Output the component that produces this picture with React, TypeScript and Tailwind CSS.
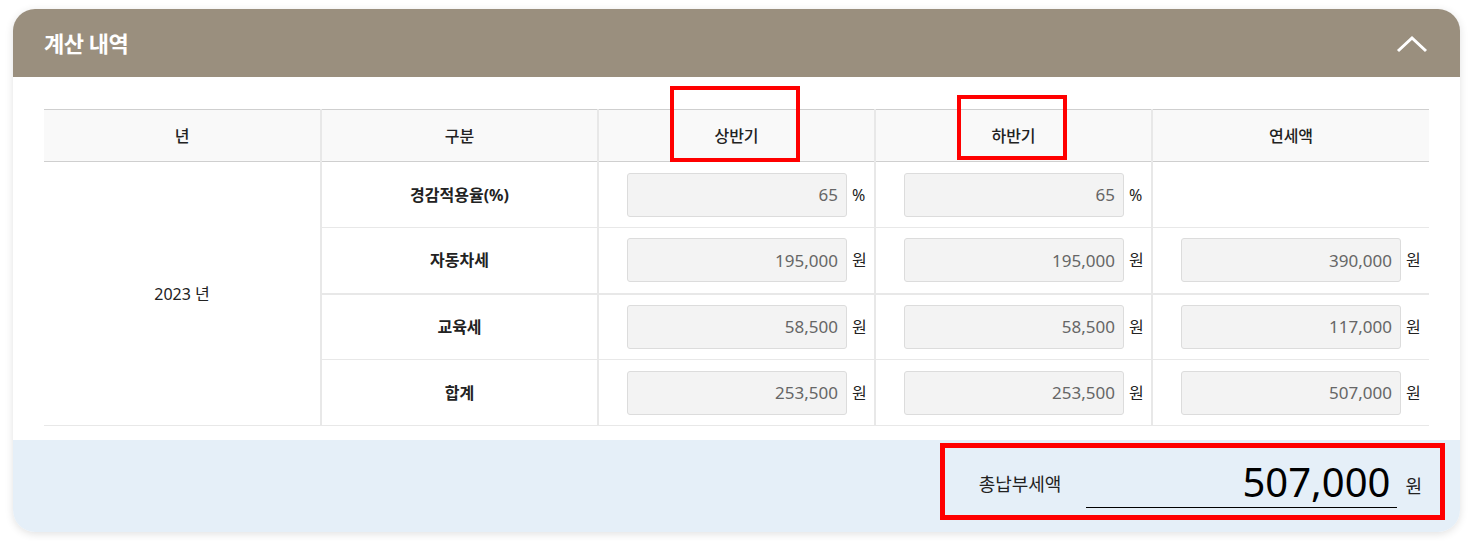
import React from 'react';

const font = { fontFamily: '"Noto Sans", "Noto Sans CJK KR", sans-serif' };

// rows of the calculation table
const rows = [
  { label: '경감적용율(%)', first: '65', second: '65', total: null as string | null, unit: '%' },
  { label: '자동차세', first: '195,000', second: '195,000', total: '390,000', unit: '원' },
  { label: '교육세', first: '58,500', second: '58,500', total: '117,000', unit: '원' },
  { label: '합계', first: '253,500', second: '253,500', total: '507,000', unit: '원' },
];

function ValueBox({ value, unit }: { value: string; unit: string }) {
  return (
    <div className="flex items-center pl-[28px]">
      <div className="w-[220px] h-[44px] flex items-center justify-end pr-[8px] bg-[#f3f3f3] border border-[#dcdcdc] rounded-[3px] text-[17px] text-[#666]">
        {value}
      </div>
      <span className="ml-[5px] text-[16px] text-[#222]">{unit}</span>
    </div>
  );
}

export default function App() {
  return (
    <div className="min-h-screen bg-white pt-[9px] pl-[13px]" style={font}>
      <div className="relative w-[1447px] rounded-[22px] bg-white shadow-[0_2px_8px_rgba(0,0,0,0.12)] overflow-hidden">
        {/* Header */}
        <div className="h-[68px] bg-[#9a8f7e] flex items-center justify-between pl-[31px] pr-[32px]">
          <h2 className="text-[22px] font-bold text-white tracking-[-0.5px]">계산 내역</h2>
          <svg width="32" height="18" viewBox="0 0 32 18" fill="none" className="mt-[2px]">
            <path d="M2 16L16 3L30 16" stroke="white" strokeWidth="3" />
          </svg>
        </div>

        {/* Table */}
        <div className="px-[31px] pt-[32px] pb-[14px]">
          <table className="w-[1385px] table-fixed border-collapse text-[16px] text-[#222]">
            <thead>
              <tr className="h-[52px] bg-[#f9f9f9] border-t border-b border-[#cfcfcf]">
                {['년', '구분', '상반기', '하반기', '연세액'].map((h, i) => (
                  <th
                    key={h}
                    className={`font-medium ${i > 0 ? 'border-l-2 border-[#e8e8e8]' : ''}`}
                  >
                    {h}
                  </th>
                ))}
              </tr>
            </thead>
            <tbody>
              {rows.map((r, i) => (
                <tr
                  key={r.label}
                  className={`h-[66px] ${i === 1 ? 'border-b-2' : 'border-b'} border-[#e8e8e8]`}
                >
                  {i === 0 && (
                    <td rowSpan={4} className="text-center align-middle">
                      2023 년
                    </td>
                  )}
                  <td className="text-center font-bold border-l-2 border-[#e8e8e8]">{r.label}</td>
                  <td className="border-l-2 border-[#e8e8e8]">
                    <ValueBox value={r.first} unit={r.unit} />
                  </td>
                  <td className="border-l-2 border-[#e8e8e8]">
                    <ValueBox value={r.second} unit={r.unit} />
                  </td>
                  <td className="border-l-2 border-[#e8e8e8]">
                    {r.total && <ValueBox value={r.total} unit={r.unit} />}
                  </td>
                </tr>
              ))}
            </tbody>
          </table>
        </div>

        {/* Total */}
        <div className="h-[92px] bg-[#e5eff8] flex items-center justify-end pr-[38px]">
          <span className="text-[18px] text-[#222] mb-[4px]">총납부세액</span>
          <div className="ml-[25px] w-[311px] h-[48px] border-b border-black flex items-end justify-end pr-[7px] mb-[4px]">
            <span className="text-[40px] leading-[50px] text-black">507,000</span>
          </div>
          <span className="ml-[8px] text-[18px] text-[#222]">원</span>
        </div>

        {/* Annotation boxes */}
        <div className="absolute left-[657px] top-[77px] w-[130px] h-[76px] border-[4px] border-[#ff0000]" />
        <div className="absolute left-[944px] top-[86px] w-[110px] h-[65px] border-[4px] border-[#ff0000]" />
        <div className="absolute left-[927px] top-[434px] w-[505px] h-[77px] border-[5px] border-[#ff0000]" />
      </div>
    </div>
  );
}
